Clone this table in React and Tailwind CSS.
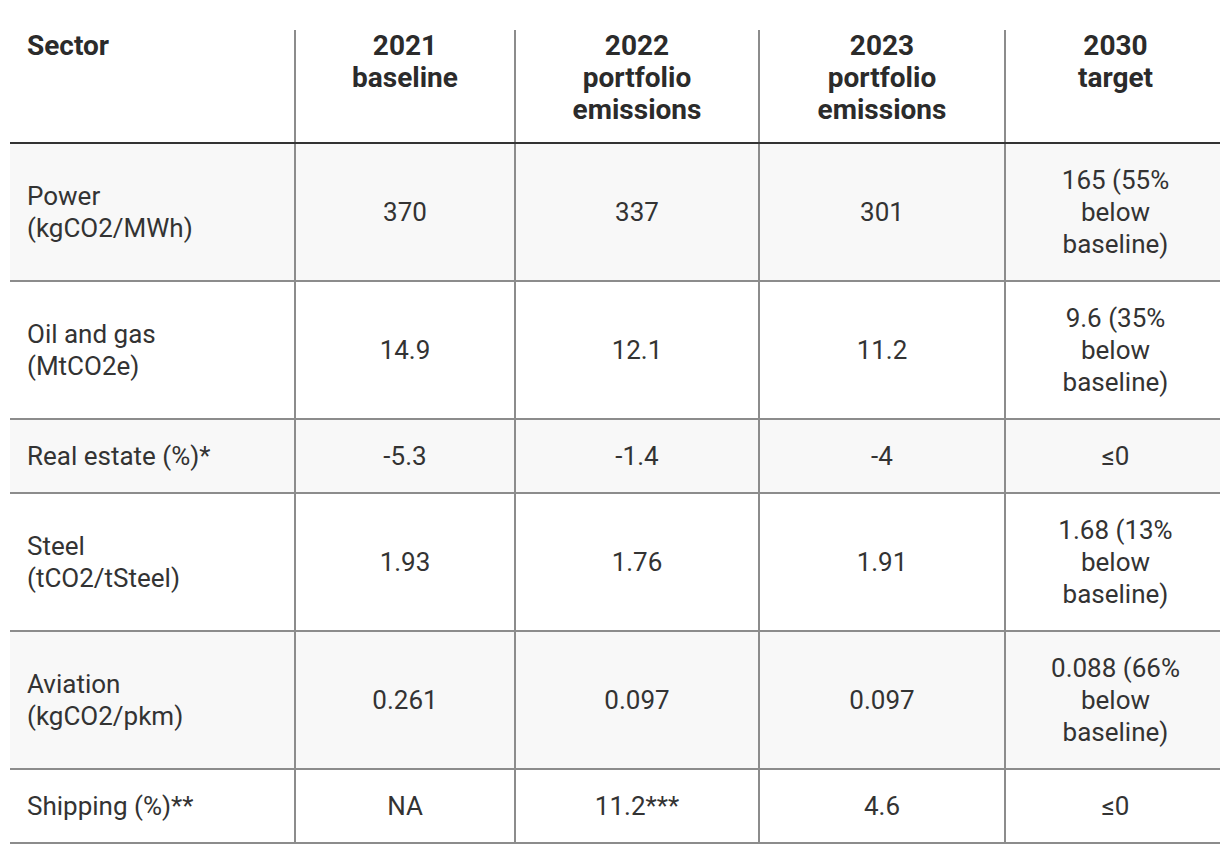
import React from 'react';

const HEADERS = [
  ['Sector'],
  ['2021', 'baseline'],
  ['2022', 'portfolio', 'emissions'],
  ['2023', 'portfolio', 'emissions'],
  ['2030', 'target'],
];

const ROWS = [
  { sector: ['Power', '(kgCO2/MWh)'], vals: ['370', '337', '301'], target: ['165 (55%', 'below', 'baseline)'], shade: true },
  { sector: ['Oil and gas', '(MtCO2e)'], vals: ['14.9', '12.1', '11.2'], target: ['9.6 (35%', 'below', 'baseline)'] },
  { sector: ['Real estate (%)*'], vals: ['-5.3', '-1.4', '-4'], target: ['≤0'], shade: true },
  { sector: ['Steel', '(tCO2/tSteel)'], vals: ['1.93', '1.76', '1.91'], target: ['1.68 (13%', 'below', 'baseline)'] },
  { sector: ['Aviation', '(kgCO2/pkm)'], vals: ['0.261', '0.097', '0.097'], target: ['0.088 (66%', 'below', 'baseline)'], shade: true },
  { sector: ['Shipping (%)**'], vals: ['NA', '11.2***', '4.6'], target: ['≤0'] },
];

const COLS = 'grid grid-cols-[284px_220px_244px_246px_221px]';

const Lines = ({ lines }) => lines.map((l, i) => <span key={i} className="block">{l}</span>);

export default function App() {
  return (
    <div className="w-[1220px] h-[854px] overflow-hidden bg-white pt-[30px] pl-[10px] font-['Roboto',sans-serif]">
      <div className="w-[1215px] text-[#333]">
        <div className={`${COLS} border-b-2 border-[#333] text-[28px] leading-[32px] font-bold text-[#2b2b2b]`}>
          {HEADERS.map((h, i) => (
            <div key={i} className={`pb-4 ${i === 0 ? 'pl-[17px] text-left' : 'border-l-2 border-[#8c8c8c] text-center'}`}>
              <Lines lines={h} />
            </div>
          ))}
        </div>
        {ROWS.map((r, i) => (
          <div key={i} className={`${COLS} border-b-2 border-[#8c8c8c] text-[26px] leading-[32px] ${r.shade ? 'bg-[#f8f8f8]' : 'bg-white'}`}>
            <div className="py-5 pl-[17px] flex flex-col justify-center">
              <Lines lines={r.sector} />
            </div>
            {r.vals.map((v, j) => (
              <div key={j} className="py-5 border-l-2 border-[#8c8c8c] flex flex-col justify-center text-center">
                {v}
              </div>
            ))}
            <div className="py-5 border-l-2 border-[#8c8c8c] flex flex-col justify-center text-center">
              <Lines lines={r.target} />
            </div>
          </div>
        ))}
      </div>
    </div>
  );
}
